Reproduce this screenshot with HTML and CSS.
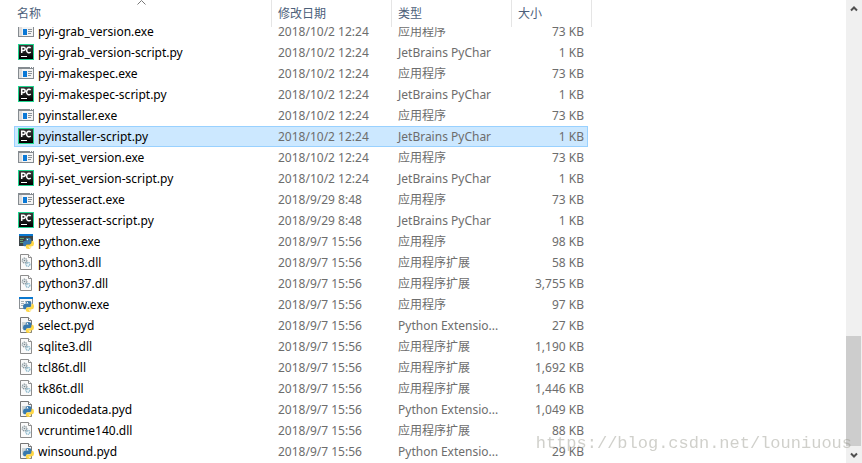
FILE: index.html
```
<!DOCTYPE html>
<html lang="zh-CN">
<head>
  <meta charset="UTF-8" />
  <title>Scripts</title>
  <link rel="stylesheet" href="styles.css">
</head>
<body>

  <svg class="sprite" aria-hidden="true">
    <defs>
      <linearGradient id="pcFill" x1="0" y1="0" x2="0" y2="1">
        <stop offset="0" stop-color="#3a3a3a" />
        <stop offset="1" stop-color="#000" />
      </linearGradient>
    </defs>
    <symbol id="exe" viewBox="0 0 16 16">
      <path fill="#858b90" d="M0 2h16v12H0z" />
      <path fill="#f4f4f4" d="M1 4h14v9H1z" />
      <path fill="#dedede" d="M1 4h3v9H1z" />
      <path fill="#fff" d="M12 2h1v1h-1zM14 2h1v1h-1z" />
      <path fill="#0a78d6" d="M5 6h4v6H5z" />
      <path fill="#8c9499" d="M10 6h4v1h-4zM10 8h4v1h-4zM10 10h3v1h-3z" />
    </symbol>
    <symbol id="pc" viewBox="0 0 16 16">
      <path fill="#20d690" d="M0 0h16v16H0z" />
      <path fill="url(#pcFill)" d="M1 1h14v14H1z" />
      <path fill="none" stroke="#fff" stroke-width="1.5" d="M3.7 9V3.2h1.8c2.3 0 2.3 3.2 0 3.2H3.9M12.7 4.1C11 2.3 8.6 3.6 8.6 6s2.4 3.8 4.1 2" />
      <path fill="#fff" d="M3 12h6v1H3z" />
    </symbol>
    <symbol id="snake" viewBox="0 0 10 10">
      <path fill="#3879ae" d="M2.4 2.2Q2.4 0 5 0t2.6 2v2.2Q7.6 5.6 6 5.6H4.2Q2.6 5.6 2.6 7.6H1.4Q0 7.4 0 5t1.8-2.6H5V2z" />
      <path fill="#ffd847" d="M7.6 7.8Q7.6 10 5 10T2.6 8V7Q2.6 5.8 4 5.8h2Q7.8 5.8 7.8 2.6h.8Q10 2.8 10 5T8.4 7.6H5V8z" />
      <path fill="#fff" d="M3.5 1h1v1h-1zM5.8 8.2h1v1h-1z" />
    </symbol>
    <symbol id="python" viewBox="0 0 16 16">
      <path fill="#3d4447" d="M1 1h14v12H1z" />
      <path fill="#0a78d0" d="M1 1h14v2H1z" />
      <path fill="#63a172" d="M2 5h4v1H2zM8 5h4v1H8zM2 7h3v1H2zM2 9h4v1H2z" />
      <use href="#snake" x="5" y="5" width="11" height="11" />
    </symbol>
    <symbol id="pythonw" viewBox="0 0 16 16">
      <path fill="#8a8f94" d="M1 1h14v12H1z" />
      <path fill="#f8f8f8" d="M2 3h12v9H2z" />
      <path fill="#0a78d0" d="M1 1h14v2H1z" />
      <path fill="#a7b0b5" d="M3 5h3v1H3zM7 5h6v1H7zM3 7h3v1H3zM3 9h3v1H3z" />
      <use href="#snake" x="5" y="5" width="11" height="11" />
    </symbol>
    <symbol id="dll" viewBox="0 0 16 16">
      <path fill="#fafafa" stroke="#8d8d8d" d="M2.5.5h8l3 3v12h-11z" />
      <path fill="#fff" stroke="#8d8d8d" d="M10.5.5v3h3" />
      <circle cx="6.5" cy="6.5" r="2.3" fill="#e6ebed" stroke="#8b979d" stroke-width="1.3" stroke-dasharray="1.2 .6" />
      <circle cx="6.5" cy="6.5" r=".8" fill="#78858c" />
      <circle cx="9.9" cy="10.3" r="2" fill="#eaf5fa" stroke="#85b2c7" stroke-width="1.3" stroke-dasharray="1.2 .6" />
      <path stroke="#92a8b2" d="M7.5 8l2 2" />
    </symbol>
    <symbol id="pyd" viewBox="0 0 16 16">
      <path fill="#f7f7f7" stroke="#777" d="M2.5.5h8l3 3v12h-11z" />
      <path fill="#fff" stroke="#777" d="M10.5.5v3h3" />
      <path fill="#cbd3d5" d="M4 5h5v7H4z" />
      <use href="#snake" x="5" y="5" width="11" height="11" />
    </symbol>
  </svg>

  <main class="pane" id="pane">
    <table class="files">
      <colgroup>
        <col class="col-name"><col class="col-mid"><col class="col-mid"><col class="col-size"><col class="col-end">
      </colgroup>
      <thead>
        <tr>
          <th class="sorted">名称<svg class="sort" viewBox="0 0 9 5"><path d="M.5 4.5l4-4 4 4" /></svg></th>
          <th>修改日期</th>
          <th>类型</th>
          <th colspan="2">大小</th>
        </tr>
      </thead>
      <tbody>
        <tr><td><svg><use href="#exe" /></svg>pyi-grab_version.exe</td><td>2018/10/2 12:24</td><td>应用程序</td><td>73 KB</td></tr>
        <tr><td><svg><use href="#pc" /></svg>pyi-grab_version-script.py</td><td>2018/10/2 12:24</td><td>JetBrains PyChar</td><td>1 KB</td></tr>
        <tr><td><svg><use href="#exe" /></svg>pyi-makespec.exe</td><td>2018/10/2 12:24</td><td>应用程序</td><td>73 KB</td></tr>
        <tr><td><svg><use href="#pc" /></svg>pyi-makespec-script.py</td><td>2018/10/2 12:24</td><td>JetBrains PyChar</td><td>1 KB</td></tr>
        <tr><td><svg><use href="#exe" /></svg>pyinstaller.exe</td><td>2018/10/2 12:24</td><td>应用程序</td><td>73 KB</td></tr>
        <tr class="selected"><td><svg><use href="#pc" /></svg>pyinstaller-script.py</td><td>2018/10/2 12:24</td><td>JetBrains PyChar</td><td>1 KB</td></tr>
        <tr><td><svg><use href="#exe" /></svg>pyi-set_version.exe</td><td>2018/10/2 12:24</td><td>应用程序</td><td>73 KB</td></tr>
        <tr><td><svg><use href="#pc" /></svg>pyi-set_version-script.py</td><td>2018/10/2 12:24</td><td>JetBrains PyChar</td><td>1 KB</td></tr>
        <tr><td><svg><use href="#exe" /></svg>pytesseract.exe</td><td>2018/9/29 8:48</td><td>应用程序</td><td>73 KB</td></tr>
        <tr><td><svg><use href="#pc" /></svg>pytesseract-script.py</td><td>2018/9/29 8:48</td><td>JetBrains PyChar</td><td>1 KB</td></tr>
        <tr><td><svg><use href="#python" /></svg>python.exe</td><td>2018/9/7 15:56</td><td>应用程序</td><td>98 KB</td></tr>
        <tr><td><svg><use href="#dll" /></svg>python3.dll</td><td>2018/9/7 15:56</td><td>应用程序扩展</td><td>58 KB</td></tr>
        <tr><td><svg><use href="#dll" /></svg>python37.dll</td><td>2018/9/7 15:56</td><td>应用程序扩展</td><td>3,755 KB</td></tr>
        <tr><td><svg><use href="#pythonw" /></svg>pythonw.exe</td><td>2018/9/7 15:56</td><td>应用程序</td><td>97 KB</td></tr>
        <tr><td><svg><use href="#pyd" /></svg>select.pyd</td><td>2018/9/7 15:56</td><td>Python Extensio...</td><td>27 KB</td></tr>
        <tr><td><svg><use href="#dll" /></svg>sqlite3.dll</td><td>2018/9/7 15:56</td><td>应用程序扩展</td><td>1,190 KB</td></tr>
        <tr><td><svg><use href="#dll" /></svg>tcl86t.dll</td><td>2018/9/7 15:56</td><td>应用程序扩展</td><td>1,692 KB</td></tr>
        <tr><td><svg><use href="#dll" /></svg>tk86t.dll</td><td>2018/9/7 15:56</td><td>应用程序扩展</td><td>1,446 KB</td></tr>
        <tr><td><svg><use href="#pyd" /></svg>unicodedata.pyd</td><td>2018/9/7 15:56</td><td>Python Extensio...</td><td>1,049 KB</td></tr>
        <tr><td><svg><use href="#dll" /></svg>vcruntime140.dll</td><td>2018/9/7 15:56</td><td>应用程序扩展</td><td>88 KB</td></tr>
        <tr><td><svg><use href="#pyd" /></svg>winsound.pyd</td><td>2018/9/7 15:56</td><td>Python Extensio...</td><td>29 KB</td></tr>
      </tbody>
    </table>
  </main>

  <div class="scrollbar">
    <button type="button" aria-label="Scroll up"><svg viewBox="0 0 8 6"><path d="M1 4.5l3-3 3 3" /></svg></button>
    <div class="track"><div class="thumb"></div></div>
    <button type="button" aria-label="Scroll down"><svg viewBox="0 0 8 6"><path d="M1 1.5l3 3 3-3" /></svg></button>
  </div>

  <div class="watermark">https://blog.csdn.net/louniuous</div>

  <script>
    // open the list slightly scrolled, first row tucked under the header
    document.getElementById('pane').scrollTop = 6;
  </script>
</body>
</html>
```

FILE: styles.css
```
* {
  box-sizing: border-box;
}

body {
  margin: 0;
  height: 100vh;
  display: flex;
  position: relative;
  overflow: hidden;
  background: #fff;
  color: #000;
  font-family: 'Noto Sans', 'Noto Sans CJK SC', sans-serif;
  font-size: 12px;
  line-height: 19px;
}

.sprite {
  position: absolute;
  width: 0;
  height: 0;
}

.pane {
  flex: 1;
  min-width: 0;
  overflow: hidden;
  padding: 0 0 8px 14px;
}

.files {
  width: 578px;
  table-layout: fixed;
  border-collapse: separate;
  border-spacing: 0;
}

.col-name {
  width: 258px;
}

.col-mid {
  width: 120px;
}

.col-size {
  width: 76px;
}

.col-end {
  width: 4px;
}

th {
  position: sticky;
  top: 0;
  height: 27px;
  padding: 0 6px;
  background: #fff;
  border-right: 1px solid #e5e5e5;
  color: #4c607a;
  font-weight: normal;
  text-align: left;
}

th.sorted {
  padding-left: 3px;
}

.sort {
  position: absolute;
  top: 0;
  left: calc(50% - 6px);
  width: 9px;
  height: 5px;
  fill: none;
  stroke: #777;
}

td {
  height: 21px;
  padding: 0 6px;
  border: 1px solid transparent;
  border-width: 1px 0;
  color: #6d6d6d;
  white-space: nowrap;
}

td:first-child {
  padding-left: 4px;
  color: #000;
}

td:nth-child(4) {
  padding: 0 4px 0 0;
  text-align: right;
}

td svg {
  width: 16px;
  height: 16px;
  margin: 1px 4px 0 0;
  vertical-align: top;
}

.selected td {
  background: #cce8ff;
  border-color: #99d1ff;
}

.selected td:first-child {
  border-left-width: 1px;
  padding-left: 3px;
}

.selected td:nth-child(4) {
  border-right-width: 1px;
  padding-right: 3px;
}

.scrollbar {
  width: 16px;
  display: flex;
  flex-direction: column;
  background: #f0f0f0;
}

.scrollbar button {
  height: 17px;
  padding: 0;
  border: 0;
  background: none;
  line-height: 0;
}

.scrollbar svg {
  width: 8px;
  height: 6px;
  fill: none;
  stroke: #505050;
  stroke-width: 2;
}

.track {
  flex: 1;
  display: flex;
  flex-direction: column;
  justify-content: flex-end;
  padding-right: 1px;
}

.thumb {
  height: 110px;
  background: #cdcdcd;
}

.watermark {
  position: absolute;
  right: 10px;
  bottom: 9px;
  color: rgba(150, 150, 140, 0.45);
  font-family: 'Liberation Mono', monospace;
  font-size: 17px;
  line-height: 20px;
  pointer-events: none;
}
```
